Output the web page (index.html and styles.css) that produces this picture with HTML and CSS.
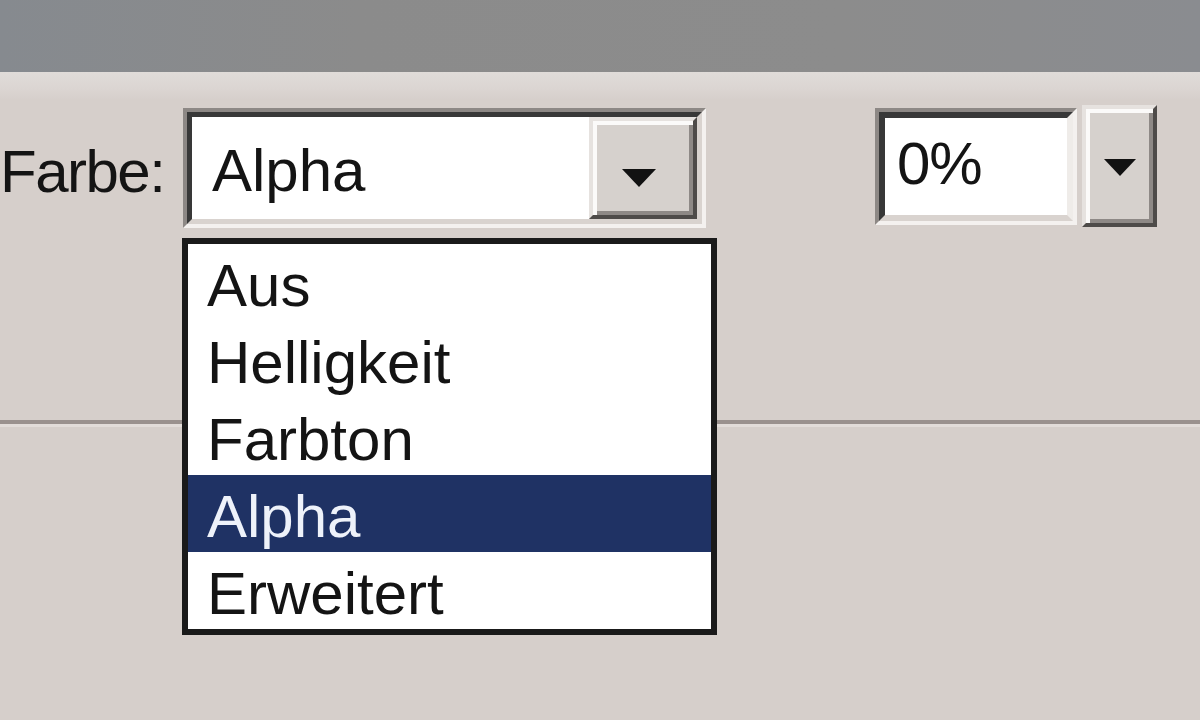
FILE: index.html
```html
<!DOCTYPE html>
<html lang="de">
<head>
<meta charset="utf-8">
<title>Farbe</title>
<link rel="stylesheet" href="styles.css">
</head>
<body>
<div class="titlebar"></div>
<div class="band"></div>
<div class="row">
  <div class="label">Farbe:</div>
  <div class="combo">
    <div class="combo-inner">
      <div class="combo-text">Alpha</div>
      <div class="btn combo-btn"><span class="arrow"></span></div>
    </div>
  </div>
  <div class="spin">
    <div class="spin-inner">0%</div>
  </div>
  <div class="btn spin-btn"><span class="arrow small"></span></div>
</div>
<div class="sep"></div>
<ul class="list">
  <li class="item">Aus</li>
  <li class="item">Helligkeit</li>
  <li class="item">Farbton</li>
  <li class="item selected">Alpha</li>
  <li class="item">Erweitert</li>
</ul>
</body>
</html>
```

FILE: styles.css
```css
html, body {
  margin: 0;
  padding: 0;
}
body {
  width: 1200px;
  height: 720px;
  overflow: hidden;
  position: relative;
  background: #d6cfcb;
  font-family: "Liberation Sans", Arial, sans-serif;
  font-size: 60px;
  color: #141414;
}
.titlebar {
  height: 72px;
  background: linear-gradient(90deg, #868a8f 0%, #8b8b8b 30%, #8c8c8c 70%, #8a8c90 100%);
}
.band {
  height: 28px;
  background: linear-gradient(#e0dcd9, #dbd5d2 60%, #d6cfcb);
}
.row {
  display: flex;
  align-items: flex-start;
  margin-top: 8px;
  height: 120px;
}
.label {
  flex: 0 0 183px;
  height: 120px;
  line-height: 120px;
  padding-top: 4px;
  box-sizing: border-box;
  letter-spacing: -1.5px;
  white-space: nowrap;
}
.combo {
  flex: 0 0 523px;
  height: 120px;
  box-sizing: border-box;
  border: 4px solid;
  border-color: #8d8885 #f4f1ef #f4f1ef #8d8885;
}
.combo-inner {
  height: 100%;
  box-sizing: border-box;
  border: 5px solid;
  border-color: #383838 #d9d3cf #d9d3cf #383838;
  background: #ffffff;
  display: flex;
}
.combo-text {
  flex: 1;
  padding-left: 20px;
  padding-top: 3px;
  line-height: 102px;
}
.btn {
  box-sizing: border-box;
  background: #d6d1cd;
  border: 4px solid;
  border-color: #e6e2df #4e4b49 #4e4b49 #e6e2df;
  box-shadow: inset 4px 4px 0 #fbfaf9, inset -4px -4px 0 #8e8986;
  display: flex;
  justify-content: center;
}
.combo-btn {
  flex: 0 0 108px;
  height: 102px;
  padding-top: 48px;
  padding-right: 8px;
}
.arrow {
  width: 0;
  height: 0;
  border-left: 17px solid transparent;
  border-right: 17px solid transparent;
  border-top: 18px solid #121212;
}
.arrow.small {
  border-left-width: 16px;
  border-right-width: 16px;
  border-top-width: 17px;
}
.spin {
  flex: 0 0 202px;
  height: 117px;
  margin-left: 169px;
  box-sizing: border-box;
  border: 4px solid;
  border-color: #8d8885 #f4f1ef #f4f1ef #8d8885;
}
.spin-inner {
  height: 100%;
  box-sizing: border-box;
  border: 6px solid;
  border-color: #383838 #efece9 #d9d3cf #383838;
  background: #ffffff;
  padding-left: 12px;
  line-height: 92px;
  font-size: 60px;
  letter-spacing: -1px;
}
.spin-btn {
  flex: 0 0 75px;
  height: 122px;
  margin-left: 5px;
  margin-top: -3px;
  padding-top: 50px;
}
.sep {
  margin-top: 192px;
  height: 4px;
  background: #9a918e;
  border-bottom: 3px solid #e2dcd9;
}
.list {
  position: absolute;
  left: 182px;
  top: 238px;
  width: 535px;
  margin: 0;
  padding: 0;
  list-style: none;
  box-sizing: border-box;
  border: 6px solid #1a1a1a;
  background: #ffffff;
}
.item {
  height: 77px;
  box-sizing: border-box;
  padding-left: 19px;
  padding-top: 7px;
  line-height: 70px;
}
.item.selected {
  background: #1f3264;
  color: #eef2fa;
}
```
